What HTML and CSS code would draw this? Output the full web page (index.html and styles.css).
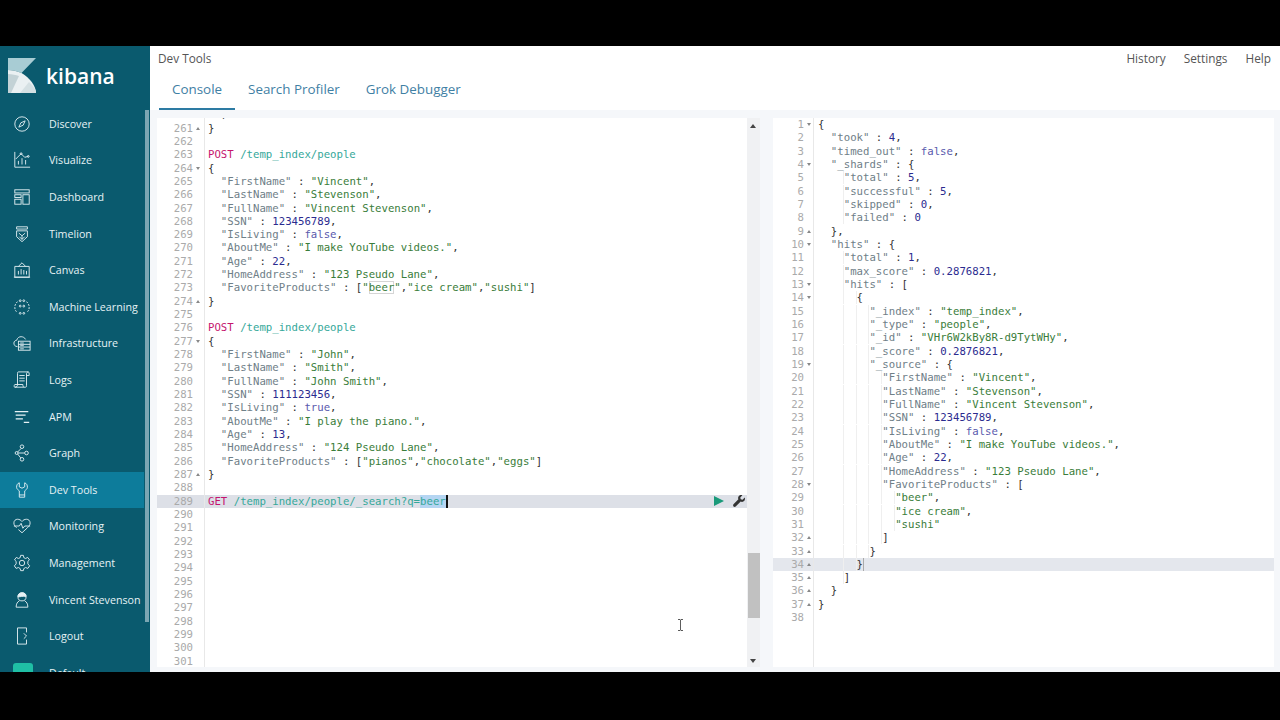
FILE: index.html
```html
<!DOCTYPE html>
<html lang="en">
<head>
    <meta charset="UTF-8">
    <title>Dev Tools - Kibana</title>
    <link rel="stylesheet" href="styles.css">
</head>
<body>
<div class="frame">
    <aside class="sidebar">
        <div class="brand">
            <svg class="brand-logo" viewBox="0 0 28 35"><path d="M0 0H28L13.500 15C9 13 4 12 0 12Z" fill="#a8ccd4"/><path d="M0 12C4 12 9 13 13.500 15C22 20 28 28 28 35H0Z" fill="#eaf0f2"/><path d="M0 35V16C4 16 8 17 11 18L3 35Z" fill="#c3d2d6"/><path d="M21 24C25 28 28 31 28 35H12Z" fill="#d5e0e3"/></svg>
            <span class="brand-name">kibana</span>
        </div>
        <nav class="nav">
            <a class="nav-item"><svg class="nav-icon" viewBox="0 0 20 20"><circle cx="10" cy="10" r="8"/><path d="M13.500 6.500L11.300 11.300L6.500 13.500L8.700 8.700Z"/></svg>Discover</a>
            <a class="nav-item"><svg class="nav-icon" viewBox="0 0 20 20"><path d="M2 1V18H19M6 15V11M10 15V8M14 15V10M3 9L9 3L13 7L17 6"/><circle cx="9" cy="3" r="1"/><circle cx="17" cy="6" r="1"/></svg>Visualize</a>
            <a class="nav-item"><svg class="nav-icon" viewBox="0 0 20 20"><rect x="2" y="2" width="16" height="3.500"/><rect x="2" y="7.500" width="7" height="3"/><rect x="2" y="12.500" width="7" height="5.500"/><rect x="11" y="7.500" width="7" height="10.500"/></svg>Dashboard</a>
            <a class="nav-item"><svg class="nav-icon" viewBox="0 0 20 20"><path d="M4 2H16V4.500H4ZM4 6.500H16V13L10 18.500L4 13ZM6.500 9L10 12L13.500 9M10 12V16M7 13L10 16L13 13"/></svg>Timelion</a>
            <a class="nav-item"><svg class="nav-icon" viewBox="0 0 20 20"><path d="M2 6H18V18H2ZM1 18H19M6 6L10 2L14 6M6 15V11M9 15V9M12 15V10M15 15V11"/></svg>Canvas</a>
            <a class="nav-item"><svg class="nav-icon" viewBox="0 0 20 20"><path d="M5 4C3 6 2 8 2 10C2 13 3 15 5 16M15 4C17 6 18 8 18 10C18 13 17 15 15 16" stroke-dasharray="2 1.500"/><circle cx="8" cy="3" r="1"/><circle cx="12" cy="3" r="1"/><circle cx="8" cy="9" r="1"/><circle cx="12" cy="9" r="1"/><circle cx="8" cy="17" r="1"/><circle cx="12" cy="17" r="1"/></svg>Machine Learning</a>
            <a class="nav-item"><svg class="nav-icon" viewBox="0 0 20 20"><path d="M5 14C2 14 1 12 1 10C1 8 3 7 4 7C5 4 7 3 9 3C11 3 13 4 14 6"/><rect x="6" y="8" width="13" height="10"/><path d="M6 11.500H19M6 14.500H19M8 10H12M8 13H12M8 16.500H12"/></svg>Infrastructure</a>
            <a class="nav-item"><svg class="nav-icon" viewBox="0 0 20 20"><path d="M2 18H14C15 18 15 17 15 16V3C15 2 16 1 17 1H6C5 1 5 2 5 3V15C5 17 4 18 2 18ZM2 18C1 18 1 16 2 15H11C11 16 11 17 12 18M17 1C18 1 18 3 18 5H15M7 5H13M7 8H13M7 11H13"/></svg>Logs</a>
            <a class="nav-item"><svg class="nav-icon" viewBox="0 0 20 20"><path d="M2 4H17M3 8H14M3 12H11M12 16H18" stroke-width="1.300"/></svg>APM</a>
            <a class="nav-item"><svg class="nav-icon" viewBox="0 0 20 20"><circle cx="10" cy="3" r="2"/><circle cx="4" cy="10" r="1.600"/><circle cx="15" cy="10" r="2"/><circle cx="10" cy="17" r="2"/><path d="M9 5L5 9M5 11L8.600 15.500M5.600 10H13"/></svg>Graph</a>
            <a class="nav-item is-active"><svg class="nav-icon" viewBox="0 0 20 20"><path d="M7 2C4.500 3 4 5 4 7C4 9 6 10 7 11V18H13V11C14 10 16 9 16 7C16 5 15.500 3 13 2V6.500L10 8L7 6.500ZM7 15.500H13"/></svg>Dev Tools</a>
            <a class="nav-item"><svg class="nav-icon" viewBox="0 0 20 20"><path d="M4 12C2 10 1 9 1 6.500C1 4 3 2.500 5 2.500C7 2.500 9 3.500 10 5C11 3.500 13 2.500 15 2.500C17 2.500 19 4 19 6.500C19 9 18 10 16 12L10 17.500L6 14M1 10H7L9 7L11 12.500L13 10H19"/></svg>Monitoring</a>
            <a class="nav-item"><svg class="nav-icon" viewBox="0 0 20 20"><circle cx="10" cy="10" r="3"/><path d="M8.500 1.500H11.500L12 4L14 5L16.300 3.800L18.300 6.500L16.500 8.200V11L18.500 13.200L16.500 16L14 15L12 16.200L11.500 18.500H8.500L8 16.200L6 15L3.500 16L1.500 13.200L3.500 11V8.200L1.700 6.500L3.700 3.800L6 5L8 4Z"/></svg>Management</a>
            <a class="nav-item"><svg class="nav-icon" viewBox="0 0 20 20"><circle cx="10" cy="6.500" r="4.500"/><path d="M5.500 6.500C8 6.500 11 5.500 14.500 6C14.500 3 12.500 2 10 2C7.500 2 5.500 4 5.500 6.500Z" class="icon-solid"/><path d="M7 11C5 12 3.500 14 3.500 18H16.500C16.500 14 15 12 13 11"/></svg>Vincent Stevenson</a>
            <a class="nav-item"><svg class="nav-icon" viewBox="0 0 20 20"><path d="M15 6V1H5V19H15V14M12 7L15 10L12 13"/></svg>Logout</a>
            <a class="nav-item"><span class="space-badge"></span>Default</a>
        </nav>
        <div class="sidebar-scroll"></div>
    </aside>

    <main class="main">
        <div class="topbar">
            <span class="app-title">Dev Tools</span>
            <div class="top-links">
                <a>History</a>
                <a>Settings</a>
                <a>Help</a>
            </div>
        </div>
        <div class="tabs">
            <a class="tab is-selected">Console</a>
            <a class="tab">Search Profiler</a>
            <a class="tab">Grok Debugger</a>
        </div>

        <div class="workspace">
            <section class="pane pane-request">
                <div class="lines lines-scrolled">
                    <div class="row"><span class="num">260</span><span class="fold"></span><span class="code">  ,</span></div>
                    <div class="row"><span class="num">261</span><span class="fold up"></span><span class="code">}</span></div>
                    <div class="row"><span class="num">262</span><span class="fold"></span><span class="code"></span></div>
                    <div class="row"><span class="num">263</span><span class="fold"></span><span class="code"><b class="verb">POST</b> <span class="url">/temp_index/people</span></span></div>
                    <div class="row"><span class="num">264</span><span class="fold down"></span><span class="code">{</span></div>
                    <div class="row"><span class="num">265</span><span class="fold"></span><span class="code">  <i>"FirstName"</i> : <u>"Vincent"</u>,</span></div>
                    <div class="row"><span class="num">266</span><span class="fold"></span><span class="code">  <i>"LastName"</i> : <u>"Stevenson"</u>,</span></div>
                    <div class="row"><span class="num">267</span><span class="fold"></span><span class="code">  <i>"FullName"</i> : <u>"Vincent Stevenson"</u>,</span></div>
                    <div class="row"><span class="num">268</span><span class="fold"></span><span class="code">  <i>"SSN"</i> : <em>123456789</em>,</span></div>
                    <div class="row"><span class="num">269</span><span class="fold"></span><span class="code">  <i>"IsLiving"</i> : <s>false</s>,</span></div>
                    <div class="row"><span class="num">270</span><span class="fold"></span><span class="code">  <i>"AboutMe"</i> : <u>"I make YouTube videos."</u>,</span></div>
                    <div class="row"><span class="num">271</span><span class="fold"></span><span class="code">  <i>"Age"</i> : <em>22</em>,</span></div>
                    <div class="row"><span class="num">272</span><span class="fold"></span><span class="code">  <i>"HomeAddress"</i> : <u>"123 Pseudo Lane"</u>,</span></div>
                    <div class="row"><span class="num">273</span><span class="fold"></span><span class="code">  <i>"FavoriteProducts"</i> : [<u>"<span class="word-hl">beer</span>"</u>,<u>"ice cream"</u>,<u>"sushi"</u>]</span></div>
                    <div class="row"><span class="num">274</span><span class="fold up"></span><span class="code">}</span></div>
                    <div class="row"><span class="num">275</span><span class="fold"></span><span class="code"></span></div>
                    <div class="row"><span class="num">276</span><span class="fold"></span><span class="code"><b class="verb">POST</b> <span class="url">/temp_index/people</span></span></div>
                    <div class="row"><span class="num">277</span><span class="fold down"></span><span class="code">{</span></div>
                    <div class="row"><span class="num">278</span><span class="fold"></span><span class="code">  <i>"FirstName"</i> : <u>"John"</u>,</span></div>
                    <div class="row"><span class="num">279</span><span class="fold"></span><span class="code">  <i>"LastName"</i> : <u>"Smith"</u>,</span></div>
                    <div class="row"><span class="num">280</span><span class="fold"></span><span class="code">  <i>"FullName"</i> : <u>"John Smith"</u>,</span></div>
                    <div class="row"><span class="num">281</span><span class="fold"></span><span class="code">  <i>"SSN"</i> : <em>111123456</em>,</span></div>
                    <div class="row"><span class="num">282</span><span class="fold"></span><span class="code">  <i>"IsLiving"</i> : <s>true</s>,</span></div>
                    <div class="row"><span class="num">283</span><span class="fold"></span><span class="code">  <i>"AboutMe"</i> : <u>"I play the piano."</u>,</span></div>
                    <div class="row"><span class="num">284</span><span class="fold"></span><span class="code">  <i>"Age"</i> : <em>13</em>,</span></div>
                    <div class="row"><span class="num">285</span><span class="fold"></span><span class="code">  <i>"HomeAddress"</i> : <u>"124 Pseudo Lane"</u>,</span></div>
                    <div class="row"><span class="num">286</span><span class="fold"></span><span class="code">  <i>"FavoriteProducts"</i> : [<u>"pianos"</u>,<u>"chocolate"</u>,<u>"eggs"</u>]</span></div>
                    <div class="row"><span class="num">287</span><span class="fold up"></span><span class="code">}</span></div>
                    <div class="row"><span class="num">288</span><span class="fold"></span><span class="code"></span></div>
                    <div class="row is-current"><span class="num">289</span><span class="fold"></span><span class="code"><b class="verb">GET</b> <span class="url">/temp_index/people/_search?q=<span class="selection">beer</span></span><span class="caret"></span></span>
                        <div class="row-actions">
                            <svg class="run-icon" viewBox="0 0 10 10"><path d="M0 0L10 5L0 10Z"/></svg>
                            <svg class="wrench-icon" viewBox="0 0 12 12"><path d="M11.800 2.600L9.500 4.700L7.700 4.300L7.300 2.500L9.400 0.300C7.800 -0.300 6 0.300 5.400 1.700C5 2.600 5 3.500 5.400 4.300L0.500 9.300C-0.100 10 0 10.800 0.500 11.400C1.100 12 2 12.100 2.700 11.500L7.700 6.600C8.500 7 9.500 7 10.300 6.600C11.800 5.900 12.300 4.200 11.800 2.600Z"/></svg>
                        </div>
                    </div>
                    <div class="row"><span class="num">290</span><span class="fold"></span><span class="code"></span></div>
                    <div class="row"><span class="num">291</span><span class="fold"></span><span class="code"></span></div>
                    <div class="row"><span class="num">292</span><span class="fold"></span><span class="code"></span></div>
                    <div class="row"><span class="num">293</span><span class="fold"></span><span class="code"></span></div>
                    <div class="row"><span class="num">294</span><span class="fold"></span><span class="code"></span></div>
                    <div class="row"><span class="num">295</span><span class="fold"></span><span class="code"></span></div>
                    <div class="row"><span class="num">296</span><span class="fold"></span><span class="code"></span></div>
                    <div class="row"><span class="num">297</span><span class="fold"></span><span class="code"></span></div>
                    <div class="row"><span class="num">298</span><span class="fold"></span><span class="code"></span></div>
                    <div class="row"><span class="num">299</span><span class="fold"></span><span class="code"></span></div>
                    <div class="row"><span class="num">300</span><span class="fold"></span><span class="code"></span></div>
                    <div class="row"><span class="num">301</span><span class="fold"></span><span class="code"></span></div>
                </div>
                <svg class="ibeam" viewBox="0 0 7 12"><path d="M1 0.500H3L3.500 1L4 0.500H6M3.500 1V11M1 11.500H3L3.500 11L4 11.500H6"/></svg>
            </section>

            <div class="scrollbar">
                <span class="scroll-arrow"></span>
                <span class="scroll-thumb"></span>
                <span class="scroll-arrow is-bottom"></span>
            </div>
            <div class="splitter"><span class="splitter-grip"></span></div>

            <section class="pane pane-response">
                <div class="lines">
                    <div class="row"><span class="num">1</span><span class="fold down"></span><span class="code">{</span></div>
                    <div class="row"><span class="num">2</span><span class="fold"></span><span class="code">  <i>"took"</i> : <em>4</em>,</span></div>
                    <div class="row"><span class="num">3</span><span class="fold"></span><span class="code">  <i>"timed_out"</i> : <s>false</s>,</span></div>
                    <div class="row"><span class="num">4</span><span class="fold down"></span><span class="code">  <i>"_shards"</i> : {</span></div>
                    <div class="row"><span class="num">5</span><span class="fold"></span><span class="code">  <span class="guide">  </span><i>"total"</i> : <em>5</em>,</span></div>
                    <div class="row"><span class="num">6</span><span class="fold"></span><span class="code">  <span class="guide">  </span><i>"successful"</i> : <em>5</em>,</span></div>
                    <div class="row"><span class="num">7</span><span class="fold"></span><span class="code">  <span class="guide">  </span><i>"skipped"</i> : <em>0</em>,</span></div>
                    <div class="row"><span class="num">8</span><span class="fold"></span><span class="code">  <span class="guide">  </span><i>"failed"</i> : <em>0</em></span></div>
                    <div class="row"><span class="num">9</span><span class="fold up"></span><span class="code">  },</span></div>
                    <div class="row"><span class="num">10</span><span class="fold down"></span><span class="code">  <i>"hits"</i> : {</span></div>
                    <div class="row"><span class="num">11</span><span class="fold"></span><span class="code">  <span class="guide">  </span><i>"total"</i> : <em>1</em>,</span></div>
                    <div class="row"><span class="num">12</span><span class="fold"></span><span class="code">  <span class="guide">  </span><i>"max_score"</i> : <em>0.2876821</em>,</span></div>
                    <div class="row"><span class="num">13</span><span class="fold down"></span><span class="code">  <span class="guide">  </span><i>"hits"</i> : [</span></div>
                    <div class="row"><span class="num">14</span><span class="fold down"></span><span class="code">  <span class="guide">  </span><span class="guide">  </span>{</span></div>
                    <div class="row"><span class="num">15</span><span class="fold"></span><span class="code">  <span class="guide">  </span><span class="guide">  </span><span class="guide">  </span><i>"_index"</i> : <u>"temp_index"</u>,</span></div>
                    <div class="row"><span class="num">16</span><span class="fold"></span><span class="code">  <span class="guide">  </span><span class="guide">  </span><span class="guide">  </span><i>"_type"</i> : <u>"people"</u>,</span></div>
                    <div class="row"><span class="num">17</span><span class="fold"></span><span class="code">  <span class="guide">  </span><span class="guide">  </span><span class="guide">  </span><i>"_id"</i> : <u>"VHr6W2kBy8R-d9TytWHy"</u>,</span></div>
                    <div class="row"><span class="num">18</span><span class="fold"></span><span class="code">  <span class="guide">  </span><span class="guide">  </span><span class="guide">  </span><i>"_score"</i> : <em>0.2876821</em>,</span></div>
                    <div class="row"><span class="num">19</span><span class="fold down"></span><span class="code">  <span class="guide">  </span><span class="guide">  </span><span class="guide">  </span><i>"_source"</i> : {</span></div>
                    <div class="row"><span class="num">20</span><span class="fold"></span><span class="code">  <span class="guide">  </span><span class="guide">  </span><span class="guide">  </span><span class="guide">  </span><i>"FirstName"</i> : <u>"Vincent"</u>,</span></div>
                    <div class="row"><span class="num">21</span><span class="fold"></span><span class="code">  <span class="guide">  </span><span class="guide">  </span><span class="guide">  </span><span class="guide">  </span><i>"LastName"</i> : <u>"Stevenson"</u>,</span></div>
                    <div class="row"><span class="num">22</span><span class="fold"></span><span class="code">  <span class="guide">  </span><span class="guide">  </span><span class="guide">  </span><span class="guide">  </span><i>"FullName"</i> : <u>"Vincent Stevenson"</u>,</span></div>
                    <div class="row"><span class="num">23</span><span class="fold"></span><span class="code">  <span class="guide">  </span><span class="guide">  </span><span class="guide">  </span><span class="guide">  </span><i>"SSN"</i> : <em>123456789</em>,</span></div>
                    <div class="row"><span class="num">24</span><span class="fold"></span><span class="code">  <span class="guide">  </span><span class="guide">  </span><span class="guide">  </span><span class="guide">  </span><i>"IsLiving"</i> : <s>false</s>,</span></div>
                    <div class="row"><span class="num">25</span><span class="fold"></span><span class="code">  <span class="guide">  </span><span class="guide">  </span><span class="guide">  </span><span class="guide">  </span><i>"AboutMe"</i> : <u>"I make YouTube videos."</u>,</span></div>
                    <div class="row"><span class="num">26</span><span class="fold"></span><span class="code">  <span class="guide">  </span><span class="guide">  </span><span class="guide">  </span><span class="guide">  </span><i>"Age"</i> : <em>22</em>,</span></div>
                    <div class="row"><span class="num">27</span><span class="fold"></span><span class="code">  <span class="guide">  </span><span class="guide">  </span><span class="guide">  </span><span class="guide">  </span><i>"HomeAddress"</i> : <u>"123 Pseudo Lane"</u>,</span></div>
                    <div class="row"><span class="num">28</span><span class="fold down"></span><span class="code">  <span class="guide">  </span><span class="guide">  </span><span class="guide">  </span><span class="guide">  </span><i>"FavoriteProducts"</i> : [</span></div>
                    <div class="row"><span class="num">29</span><span class="fold"></span><span class="code">  <span class="guide">  </span><span class="guide">  </span><span class="guide">  </span><span class="guide">  </span><span class="guide">  </span><u>"beer"</u>,</span></div>
                    <div class="row"><span class="num">30</span><span class="fold"></span><span class="code">  <span class="guide">  </span><span class="guide">  </span><span class="guide">  </span><span class="guide">  </span><span class="guide">  </span><u>"ice cream"</u>,</span></div>
                    <div class="row"><span class="num">31</span><span class="fold"></span><span class="code">  <span class="guide">  </span><span class="guide">  </span><span class="guide">  </span><span class="guide">  </span><span class="guide">  </span><u>"sushi"</u></span></div>
                    <div class="row"><span class="num">32</span><span class="fold up"></span><span class="code">  <span class="guide">  </span><span class="guide">  </span><span class="guide">  </span><span class="guide">  </span>]</span></div>
                    <div class="row"><span class="num">33</span><span class="fold up"></span><span class="code">  <span class="guide">  </span><span class="guide">  </span><span class="guide">  </span>}</span></div>
                    <div class="row is-current"><span class="num">34</span><span class="fold up"></span><span class="code">  <span class="guide">  </span><span class="guide">  </span>}<span class="caret is-thin"></span></span></div>
                    <div class="row"><span class="num">35</span><span class="fold up"></span><span class="code">  <span class="guide">  </span>]</span></div>
                    <div class="row"><span class="num">36</span><span class="fold up"></span><span class="code">  }</span></div>
                    <div class="row"><span class="num">37</span><span class="fold up"></span><span class="code">}</span></div>
                    <div class="row"><span class="num">38</span><span class="fold"></span><span class="code"></span></div>
                    <div class="row"><span class="num"></span><span class="fold"></span><span class="code"></span></div>
                    <div class="row"><span class="num"></span><span class="fold"></span><span class="code"></span></div>
                    <div class="row"><span class="num"></span><span class="fold"></span><span class="code"></span></div>
                    <div class="row"><span class="num"></span><span class="fold"></span><span class="code"></span></div>
                </div>
            </section>
        </div>
    </main>
</div>
</body>
</html>
```

FILE: styles.css
```css
body {
    margin: 0;
    height: 720px;
    background-color: #000;
    overflow: hidden;
    font-family: "Open Sans", sans-serif;
}
.frame {
    display: flex;
    height: 626px;
    margin-top: 46px;
    background-color: #f5f7fa;
}
.sidebar {
    width: 150px;
    flex: none;
    background-color: #0a5a6e;
    color: #e6f2f5;
    position: relative;
    overflow: hidden;
}
.brand {
    display: flex;
    align-items: center;
    gap: 10px;
    height: 59.6px;
    padding-left: 8px;
}
.brand-logo {
    width: 28px;
    height: 35px;
}
.brand-name {
    font-size: 21px;
    font-weight: 600;
    color: #fff;
}
.nav {
    display: flex;
    flex-direction: column;
}
.nav-item {
    display: flex;
    align-items: center;
    flex: none;
    height: 36.6px;
    padding-left: 13px;
    font-size: 10.7px;
    white-space: nowrap;
}
.nav-item.is-active {
    background-color: #0d7c9b;
    width: 131px;
}
.nav-icon {
    width: 18px;
    height: 18px;
    margin-right: 18px;
    flex: none;
    fill: none;
    stroke: #e6f2f5;
    stroke-width: 1;
}
.icon-solid {
    fill: #e6f2f5;
}
.space-badge {
    width: 20px;
    height: 20px;
    margin-right: 16px;
    border-radius: 3px;
    background-color: #1fbfa5;
}
.sidebar-scroll {
    position: absolute;
    top: 64px;
    left: 145px;
    width: 4px;
    height: 512px;
    background-color: #7ba6b3;
}
.main {
    flex: 1;
    min-width: 0;
    display: flex;
    flex-direction: column;
}
.topbar {
    display: flex;
    align-items: center;
    justify-content: space-between;
    height: 24px;
    padding: 0 9px 0 8px;
    background-color: #fff;
    font-size: 11.8px;
    color: #555;
}
.top-links {
    display: flex;
    gap: 18px;
}
.tabs {
    display: flex;
    height: 40px;
    padding-left: 9px;
    background-color: #fff;
}
.tab {
    display: flex;
    align-items: center;
    padding: 0 13px;
    border-bottom: 2px solid transparent;
    font-size: 13.4px;
    color: #3f80a4;
}
.tab.is-selected {
    border-bottom-color: #2d7ba3;
}
.workspace {
    flex: 1;
    min-height: 0;
    display: flex;
    padding: 8px 6px 5px 7px;
}
.pane {
    position: relative;
    overflow: hidden;
    background-color: #fff;
}
.pane-request {
    width: 590px;
    flex: none;
}
.pane-response {
    flex: 1;
    --num-width: 31px;
    --fold-width: 10px;
    --code-pad: 4px;
}
.lines {
    font-family: "DejaVu Sans Mono", monospace;
    font-size: 10.68px;
    line-height: 13.33px;
}
.lines-scrolled {
    margin-top: -9.8px;
}
.row {
    display: flex;
    position: relative;
    height: 13.33px;
}
.row.is-current {
    background-color: #dde0e7;
}
.pane-response .row.is-current {
    background-color: #e4e7ed;
}
.num {
    width: var(--num-width, 36px);
    flex: none;
    text-align: right;
    color: #aaa;
}
.fold {
    position: relative;
    width: var(--fold-width, 12px);
    flex: none;
    border-right: 1px solid #e8e8e8;
    box-sizing: border-box;
}
.fold.up::after,
.fold.down::after {
    content: "";
    position: absolute;
    top: 5px;
    left: 3px;
    border-left: 2.5px solid transparent;
    border-right: 2.5px solid transparent;
}
.fold.up::after {
    border-bottom: 3px solid #888;
}
.fold.down::after {
    border-top: 3px solid #888;
}
.code {
    padding-left: var(--code-pad, 3px);
    white-space: pre;
    color: #333;
}
.code b {
    font-weight: normal;
}
.code i {
    font-style: normal;
    color: #6f8088;
}
.code u {
    text-decoration: none;
    color: #3a7d3a;
}
.code em {
    font-style: normal;
    color: #2b2b8f;
}
.code s {
    text-decoration: none;
    color: #5a5aad;
}
.verb {
    color: #c5146e;
}
.url {
    color: #35a89a;
}
.guide {
    box-shadow: inset -1px 0 0 #efefef;
}
.word-hl {
    box-shadow: inset 0 0 0 1px #d5d5d5;
}
.selection {
    background-color: #b5d5f2;
}
.caret {
    display: inline-block;
    width: 2px;
    height: 13px;
    vertical-align: top;
    background-color: #111;
}
.caret.is-thin {
    width: 1px;
    background-color: #aaa;
}
.row-actions {
    position: absolute;
    top: 0;
    right: 2px;
    height: 100%;
    display: flex;
    align-items: center;
    gap: 9px;
}
.run-icon {
    width: 10px;
    height: 10px;
    fill: #1b9a7a;
}
.wrench-icon {
    width: 12px;
    height: 12px;
    fill: #333;
}
.ibeam {
    position: absolute;
    left: 520px;
    top: 501px;
    width: 7px;
    height: 12px;
    fill: none;
    stroke: #333;
    stroke-width: 0.8;
}
.scrollbar {
    position: relative;
    width: 13px;
    flex: none;
    background-color: #f0f1f3;
}
.scroll-arrow {
    position: absolute;
    top: 6px;
    left: 3px;
    border-left: 3.5px solid transparent;
    border-right: 3.5px solid transparent;
    border-bottom: 4px solid #444;
}
.scroll-arrow.is-bottom {
    top: auto;
    bottom: 4px;
    border-bottom: 0;
    border-top: 4px solid #444;
}
.scroll-thumb {
    position: absolute;
    top: 435px;
    left: 1px;
    right: 0;
    height: 65px;
    background-color: #c1c1c1;
}
.splitter {
    width: 13px;
    flex: none;
    display: flex;
    align-items: center;
    justify-content: center;
}
.splitter-grip {
    width: 3px;
    height: 9px;
    background-image: radial-gradient(#889 40%, transparent 45%);
    background-size: 2px 2px;
}
```
